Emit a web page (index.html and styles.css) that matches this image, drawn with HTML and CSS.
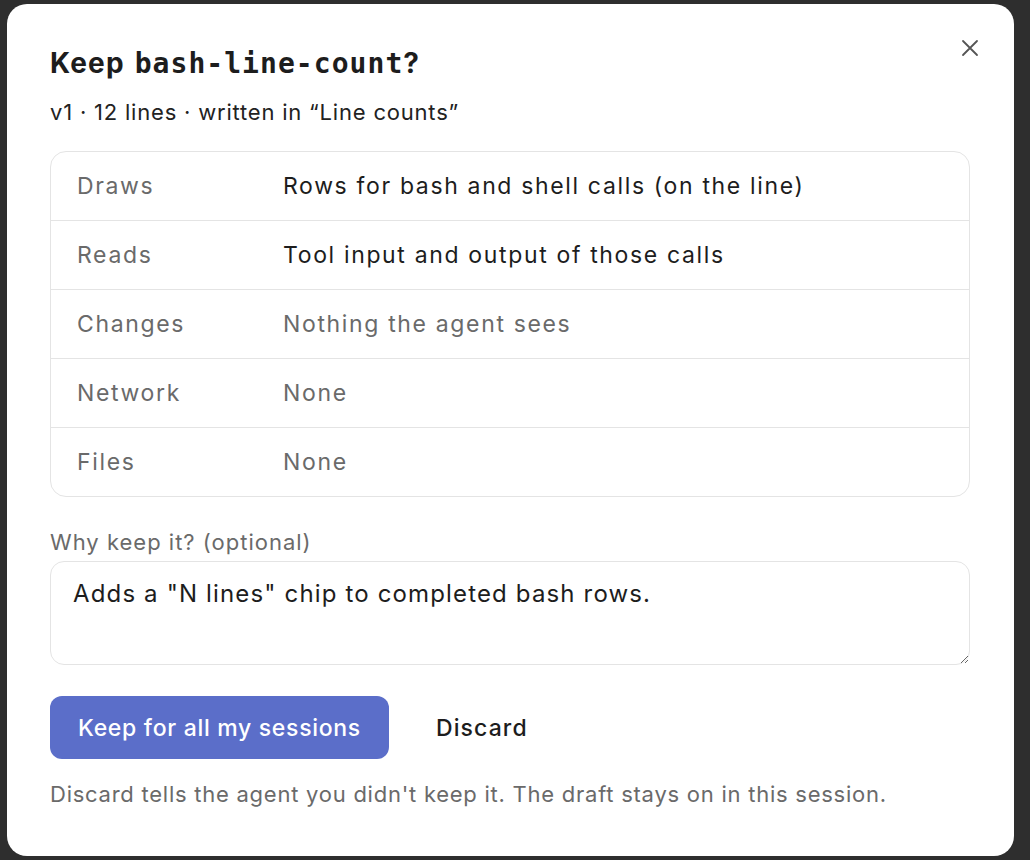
FILE: index.html
```html
<!DOCTYPE html>
<html lang="en">
<head>
    <meta charset="UTF-8">
    <meta name="viewport" content="width=device-width, initial-scale=1.0">
    <title>Keep bash-line-count?</title>
    <link rel="stylesheet" href="styles.css">
</head>
<body>

    <div class="dialog">
        <button class="close" aria-label="Close">
            <svg width="18" height="18" viewBox="0 0 18 18">
                <path d="M2 2 L16 16 M16 2 L2 16" stroke="#555" stroke-width="1.8" stroke-linecap="round" fill="none"/>
            </svg>
        </button>

        <h1>Keep <code>bash-line-count</code>?</h1>
        <p class="meta">v1 · 12 lines · written in “Line counts”</p>

        <!-- Что делает черновик -->
        <div class="facts">
            <div class="row">
                <span class="label">Draws</span>
                <span class="value">Rows for bash and shell calls (on the line)</span>
            </div>
            <div class="row">
                <span class="label">Reads</span>
                <span class="value">Tool input and output of those calls</span>
            </div>
            <div class="row">
                <span class="label">Changes</span>
                <span class="value muted">Nothing the agent sees</span>
            </div>
            <div class="row">
                <span class="label">Network</span>
                <span class="value muted">None</span>
            </div>
            <div class="row">
                <span class="label">Files</span>
                <span class="value muted">None</span>
            </div>
        </div>

        <label class="why" for="reason">Why keep it? (optional)</label>
        <textarea id="reason">Adds a "N lines" chip to completed bash rows.</textarea>

        <div class="actions">
            <button class="primary">Keep for all my sessions</button>
            <button class="plain">Discard</button>
        </div>

        <p class="note">Discard tells the agent you didn't keep it. The draft stays on in this session.</p>
    </div>

</body>
</html>
```

FILE: styles.css
```css
/* Общие стили */
body {
    font-family: Inter, "Noto Sans", sans-serif;
    background-color: #2e2e2e;
    margin: 0;
    padding: 4px 16px 4px 7px;
}

.dialog {
    position: relative;
    box-sizing: border-box;
    height: 852px;
    background-color: #fff;
    border-radius: 20px;
    padding: 41px 44px 0 43px;
    display: flex;
    flex-direction: column;
    color: #1d1d1d;
}

.close {
    position: absolute;
    top: 35px;
    right: 35px;
    width: 18px;
    height: 18px;
    padding: 0;
    border: none;
    background: none;
    cursor: pointer;
}

h1 {
    margin: 0;
    font-size: 28px;
    line-height: 36px;
    font-weight: 700;
    letter-spacing: 1.2px;
    word-spacing: 2px;
}

h1 code {
    font-family: "DejaVu Sans Mono", "Liberation Mono", monospace;
    font-size: 28px;
    font-weight: 700;
    letter-spacing: 1.05px;
}

.meta {
    margin: 15px 0 0;
    font-size: 22px;
    line-height: 30px;
    letter-spacing: 0.8px;
    color: #222;
}

.facts {
    margin-top: 24px;
    border: 1px solid #e4e4e4;
    border-radius: 16px;
}

.row {
    display: flex;
    align-items: center;
    height: 68px;
    padding: 0 26px;
    font-size: 23px;
    letter-spacing: 1.65px;
    border-top: 1px solid #e4e4e4;
}

.row:first-child {
    border-top: none;
}

.label {
    width: 206px;
    color: #6a6a6a;
}

.value {
    color: #1d1d1d;
}

.value.muted {
    color: #6a6a6a;
}

.why {
    margin-top: 30px;
    font-size: 22px;
    line-height: 30px;
    letter-spacing: 1px;
    color: #6a6a6a;
}

textarea {
    margin-top: 4px;
    height: 104px;
    box-sizing: border-box;
    padding: 17px 22px;
    border: 1px solid #e4e4e4;
    border-radius: 14px;
    font-family: Inter, "Noto Sans", sans-serif;
    font-size: 24px;
    line-height: 30px;
    letter-spacing: 1.15px;
    color: #1d1d1d;
    resize: vertical;
    outline: none;
}

.actions {
    display: flex;
    align-items: center;
    margin-top: 31px;
}

.actions button {
    font-family: Inter, "Noto Sans", sans-serif;
    font-size: 23px;
    letter-spacing: 0.7px;
    cursor: pointer;
    border: none;
}

.actions .primary {
    height: 63px;
    width: 339px;
    background-color: #5b6ec9;
    color: #fff;
    border-radius: 12px;
    font-weight: 500;
}

.actions .plain {
    margin-left: 26px;
    padding: 0 21px;
    height: 63px;
    background: none;
    color: #1d1d1d;
    font-weight: 500;
    letter-spacing: 1.1px;
}

.note {
    margin: 20px 0 0;
    font-size: 22px;
    line-height: 30px;
    letter-spacing: 0.75px;
    color: #6a6a6a;
}
```
